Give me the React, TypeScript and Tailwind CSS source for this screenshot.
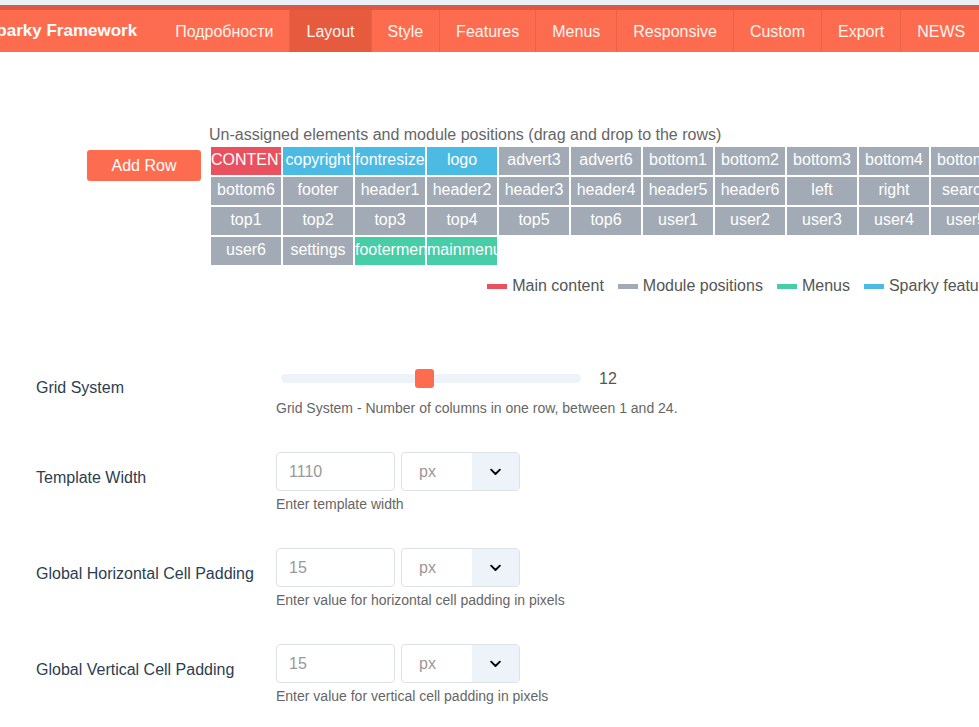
import React from "react";

const navItems = ["Подробности", "Layout", "Style", "Features", "Menus", "Responsive", "Custom", "Export", "NEWS"];

type Kind = "main" | "module" | "menu" | "feature";

const cells: [string, Kind][] = [
  ["CONTENT", "main"], ["copyright", "feature"], ["fontresize", "feature"], ["logo", "feature"],
  ["advert3", "module"], ["advert6", "module"], ["bottom1", "module"], ["bottom2", "module"],
  ["bottom3", "module"], ["bottom4", "module"], ["bottom5", "module"],
  ["bottom6", "module"], ["footer", "module"], ["header1", "module"], ["header2", "module"],
  ["header3", "module"], ["header4", "module"], ["header5", "module"], ["header6", "module"],
  ["left", "module"], ["right", "module"], ["search", "module"],
  ["top1", "module"], ["top2", "module"], ["top3", "module"], ["top4", "module"],
  ["top5", "module"], ["top6", "module"], ["user1", "module"], ["user2", "module"],
  ["user3", "module"], ["user4", "module"], ["user5", "module"],
  ["user6", "module"], ["settings", "module"], ["footermenu", "menu"], ["mainmenu", "menu"],
];

const kindBg: Record<Kind, string> = {
  main: "bg-[#e9515e]",
  module: "bg-[#a2abb5]",
  menu: "bg-[#47cda8]",
  feature: "bg-[#4cbbe4]",
};

const legend: [string, string][] = [
  ["Main content", "bg-[#e9515e]"],
  ["Module positions", "bg-[#a2abb5]"],
  ["Menus", "bg-[#47cda8]"],
  ["Sparky features", "bg-[#4cbbe4]"],
];

function Chevron() {
  return (
    <svg className="h-[15px] w-[15px] text-black" viewBox="0 0 24 24" fill="none" stroke="currentColor" strokeWidth={3} strokeLinecap="round" strokeLinejoin="round">
      <path d="M5 9l7 7 7-7" />
    </svg>
  );
}

function FieldRow({ label, value, help }: { label: string; value: string; help: string }) {
  return (
    <div className="flex mb-[36px]">
      <div className="w-[276px] shrink-0 pl-[36px] pt-[17px] text-[16px] leading-[18px] text-[#2c3e50]">{label}</div>
      <div>
        <div className="flex gap-[6px]">
          <div className="flex h-[39px] w-[119px] items-center rounded-[4px] border border-[#dde2e8] pl-[12px] text-[16px] text-[#999]">
            {value}
          </div>
          <div className="flex h-[39px] w-[119px] overflow-hidden rounded-[4px] border border-[#dde2e8]">
            <div className="flex flex-1 items-center pl-[17px] text-[16px] text-[#999]">px</div>
            <div className="flex w-[47px] items-center justify-center bg-[#eef3f9]">
              <Chevron />
            </div>
          </div>
        </div>
        <div className="mt-[5px] text-[14px] leading-[16px] text-[#666]">{help}</div>
      </div>
    </div>
  );
}

export default function App() {
  return (
    <div className="h-[727px] w-[979px] overflow-hidden bg-white font-['Liberation_Sans',Arial,sans-serif]">
      <div className="h-[5px] bg-[#eaf0f8]" />
      <nav className="flex h-[47px] border-t-[5px] border-[#dc5a43] bg-[#fe6c4f] text-[16px] text-[#fff4f0]">
        <div className="ml-[-15px] flex shrink-0 items-center pr-[22px] text-[17px] font-bold text-white">Sparky Framework</div>
        {navItems.map((item, i) => (
          <div
            key={item}
            className={
              "flex shrink-0 items-center px-4 pt-[2px] " +
              (i > 0 ? "border-l border-[#ec6246] " : "") +
              (item === "Layout" ? "bg-[#e65a3e]" : "")
            }
          >
            {item}
          </div>
        ))}
      </nav>

      <div className="flex items-start pl-[87px] pt-[74px]">
        <button className="mt-[24px] h-[31px] w-[114px] shrink-0 rounded-[3px] bg-[#fe6c4f] text-[16px] text-white">
          Add Row
        </button>
        <div className="ml-[8px] w-[794px] shrink-0">
          <div className="text-[16px] leading-[18px] text-[#666]">
            Un-assigned elements and module positions (drag and drop to the rows)
          </div>
          <div className="mt-[3px] grid grid-cols-[repeat(11,70px)] gap-[2px] pl-[2px]">
            {cells.map(([name, kind]) => (
              <div
                key={name}
                className={"h-[28px] overflow-hidden whitespace-nowrap text-center text-[16px] leading-[26px] text-white " + kindBg[kind]}
              >
                {name}
              </div>
            ))}
          </div>
          <div className="mt-[12px] flex justify-end gap-[14px] pr-[2px] text-[16px] leading-[18px] text-[#555]">
            {legend.map(([label, color]) => (
              <div key={label} className="flex items-center gap-[5px] whitespace-nowrap">
                <span className={"h-[5px] w-[20px] " + color} />
                {label}
              </div>
            ))}
          </div>
        </div>
      </div>

      <div className="mt-[74px]">
        <div className="flex mb-[36px]">
          <div className="w-[276px] shrink-0 pl-[36px] pt-[10px] text-[16px] leading-[18px] text-[#2c3e50]">Grid System</div>
          <div>
            <div className="flex h-[19px] items-center">
              <div className="relative ml-[5px] h-[9px] w-[300px] rounded-full bg-[#eef3f9]">
                <div className="absolute left-[134px] top-[-5px] h-[19px] w-[19px] rounded-[3px] bg-[#fe6c4f]" />
              </div>
              <span className="ml-[18px] text-[16px] text-[#555]">12</span>
            </div>
            <div className="mt-[12px] text-[14px] leading-[16px] text-[#666]">
              Grid System - Number of columns in one row, between 1 and 24.
            </div>
          </div>
        </div>
        <FieldRow label="Template Width" value="1110" help="Enter template width" />
        <FieldRow label="Global Horizontal Cell Padding" value="15" help="Enter value for horizontal cell padding in pixels" />
        <FieldRow label="Global Vertical Cell Padding" value="15" help="Enter value for vertical cell padding in pixels" />
      </div>
    </div>
  );
}
